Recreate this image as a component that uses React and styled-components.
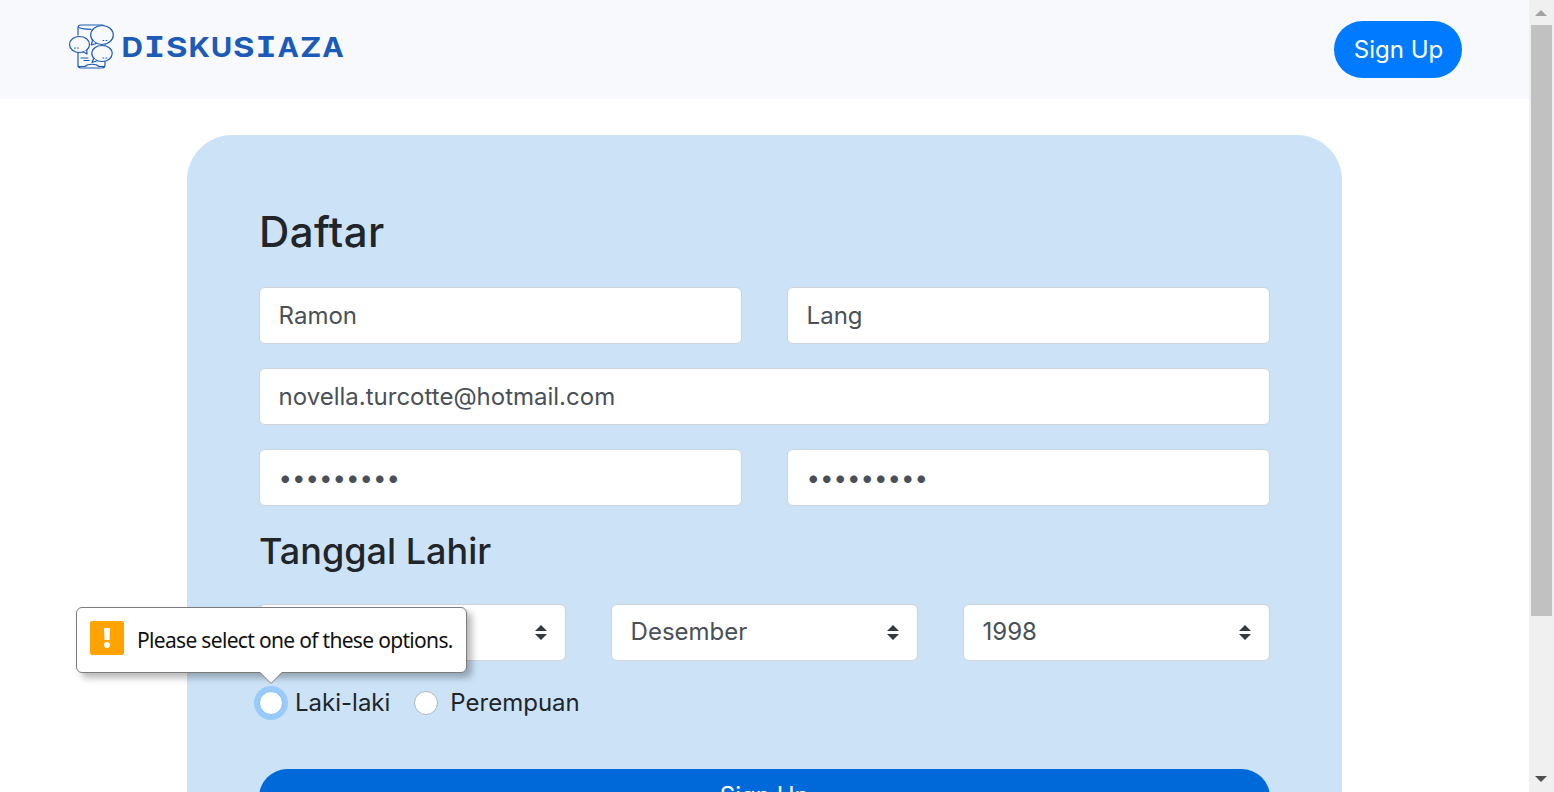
import React from "react";
import styled, { createGlobalStyle } from "styled-components";

const GlobalStyle = createGlobalStyle`
  *, *::before, *::after { box-sizing: border-box; }
  body {
    margin: 0;
    overflow: hidden;
    background: #fff;
    color: #212529;
    font-family: Inter, "Liberation Sans", sans-serif;
    font-size: 24px;
    font-weight: 400;
    line-height: 36px;
  }
`;

const Window = styled.div`
  display: flex;
  height: 792px;
  overflow: hidden;
`;

const Page = styled.div`
  flex: 1;
  min-width: 0;
  overflow: hidden;
`;

const Navbar = styled.header`
  display: flex;
  justify-content: space-between;
  align-items: flex-start;
  height: 98.5px;
  padding: 21px 67px 0 66px;
  background: #f8f9fc;
`;

const Brand = styled.a`
  display: block;
  height: 54px;
`;

const Button = styled.button`
  display: block;
  width: ${(p) => (p.$block ? "100%" : "128px")};
  height: 57px;
  padding: ${(p) => (p.$block ? "0 0 4px" : "0 0 0 1px")};
  border: 0;
  border-radius: 29px;
  background: ${(p) => (p.$block ? "#0069d9" : "#007bff")};
  color: #fff;
  font: 400 24px/${(p) => (p.$block ? "53px" : "57px")} Inter, sans-serif;
  text-align: center;
`;

const Card = styled.main`
  width: 1155px;
  height: 800px;
  margin: 36.5px auto 0;
  padding: 72px 72px 0;
  border-radius: 45px;
  background: #cce3f7;
`;

const Title = styled.h1`
  margin: 0 0 30px;
  font-size: 42px;
  font-weight: 500;
  line-height: 50px;
  letter-spacing: 0.4px;
`;

const Subtitle = styled.h2`
  margin: 0 0 31px;
  font-size: 36px;
  font-weight: 500;
  line-height: 43px;
`;

const Row = styled.div`
  display: flex;
  gap: 45px;
  margin-bottom: 24px;
`;

const Input = styled.input`
  flex: 1;
  min-width: 0;
  height: 57px;
  padding: 0 18px 0 18.6px;
  border: 1px solid #ced4da;
  border-radius: 6px;
  outline: 0;
  background: #fff;
  color: #495057;
  font: 400 24px Inter, sans-serif;
`;

const SelectBox = styled.div`
  display: flex;
  flex: 1;
  justify-content: space-between;
  align-items: center;
  height: 57px;
  padding: 0 18px 0 18.6px;
  border: 1px solid #ced4da;
  border-radius: 6px;
  background: #fff;
  color: #495057;
`;

const SelectValue = styled.span`
  padding-bottom: 2px;
`;

const Options = styled.div`
  display: flex;
  gap: 24px;
  height: 36px;
  margin-bottom: 48px;
`;

const Option = styled.label`
  position: relative;
  display: flex;
  align-items: center;
  gap: 12px;
`;

const Radio = styled.span`
  width: 24px;
  height: 24px;
  border: 1px solid ${(p) => (p.$focused ? "#80bdff" : "#adb5bd")};
  border-radius: 50%;
  background: #fff;
  box-shadow: ${(p) => (p.$focused ? "0 0 0 5px #99caf9" : "none")};
`;

const Bubble = styled.div`
  position: absolute;
  left: -183px;
  top: -78px;
  display: flex;
  align-items: center;
  width: 390.5px;
  height: 66px;
  padding: 0 13px;
  gap: 13px;
  border: 1px solid #7c7c7c;
  border-radius: 6px;
  background: #fff;
  box-shadow: 5px 5px 7px rgba(0, 0, 0, 0.28);
  color: #111;
`;

const WarningIcon = styled.svg`
  flex: none;
  margin-top: -5px;
`;

const BubbleText = styled.span`
  font: 400 21px/30px "Noto Sans", sans-serif;
  letter-spacing: -0.68px;
  white-space: nowrap;
`;

const BubbleArrow = styled.svg`
  position: absolute;
  left: 182px;
  top: 63px;
`;

const Scrollbar = styled.div`
  display: flex;
  flex-direction: column;
  align-items: center;
  width: 25px;
  height: 792px;
  padding: 9px 2px 9px 1px;
  background: #f0f0f0;
`;

const Thumb = styled.div`
  width: 21px;
  height: 591px;
  margin: 9px 0 auto;
  background: #c1c1c1;
`;

const wordmark = "DISKUSIAZA";

function Logo() {
  return (
    <svg width="284" height="54" viewBox="0 0 284 54" fill="none" stroke="#1d5bb9" strokeWidth="1.2" strokeLinecap="round" strokeLinejoin="round">
      <path d="M12 14V7q0-3 3-3h21q3 0 3 3v37q0 3-3 3H15q-3 0-3-3V31M12 6.5q3 1 6 1.3t7 .5M12 45.5h7c3-3 11-3 14 0h5M15 37h7M18 39.5h5" />
      <ellipse cx="36" cy="14" rx="11.3" ry="9.5" fill="#f8f9fc" />
      <path fill="#f8f9fc" d="M26.5 19.5 25.3 24 30 22.5" />
      <ellipse cx="13.5" cy="23.5" rx="10" ry="8" fill="#f8f9fc" />
      <path fill="#f8f9fc" d="M17 30.5 21 33 20.8 29" />
      <ellipse cx="36" cy="32.5" rx="10.2" ry="8" fill="#f8f9fc" />
      <path fill="#f8f9fc" d="M27.7 37.5 26 41.5 31 39.8" />
      <path d="M8.5 27h.8M11.5 27h.8M37 19.5h.8M40 19.5h.8M37 37h.8M40 37h.8" />
      <text y="36" fill="#1d5bb9" stroke="none" fontFamily="Inter" fontWeight="700" fontSize="27.5">
        {[...wordmark].map((letter, i) => (
          <tspan
            key={i}
            x={55.5 + i * 22.3}
            textLength={21.5}
            lengthAdjust="spacingAndGlyphs"
            fontFamily={letter === "I" ? "DejaVu Sans Mono" : "Inter"}
          >
            {letter}
          </tspan>
        ))}
      </text>
    </svg>
  );
}

function Select({ value }) {
  return (
    <SelectBox>
      <SelectValue>{value}</SelectValue>
      <svg width="12" height="15" viewBox="0 0 12 15" fill="#343a40">
        <path d="M0 6 6 0l6 6ZM0 9h12l-6 6Z" />
      </svg>
    </SelectBox>
  );
}

export default function App() {
  return (
    <Window>
      <GlobalStyle />
      <Page>
        <Navbar>
          <Brand><Logo /></Brand>
          <Button>Sign Up</Button>
        </Navbar>
        <Card>
          <Title>Daftar</Title>
          <Row>
            <Input defaultValue="Ramon" />
            <Input defaultValue="Lang" />
          </Row>
          <Row><Input defaultValue="novella.turcotte@hotmail.com" /></Row>
          <Row>
            <Input type="password" defaultValue="Pass12345" />
            <Input type="password" defaultValue="Pass12345" />
          </Row>
          <Subtitle>Tanggal Lahir</Subtitle>
          <Row>
            <Select value="" />
            <Select value="Desember" />
            <Select value="1998" />
          </Row>
          <Options>
            <Option>
              <Radio $focused />
              Laki-laki
              <Bubble>
                <WarningIcon width="34" height="34" viewBox="0 0 34 34">
                  <rect width="34" height="34" rx="2" fill="#ffa300" />
                  <path fill="#fff" d="M14 7h6l-.5 12h-5Z" />
                  <circle cx="17" cy="24" r="3" fill="#fff" />
                </WarningIcon>
                <BubbleText>Please select one of these options.</BubbleText>
                <BubbleArrow width="24" height="14" viewBox="0 0 24 14">
                  <path d="M0 0H24L12 12.5Z" fill="#fff" />
                  <path d="M0 1.5H1L12 12.5 23 1.5H24" fill="none" stroke="#7c7c7c" />
                </BubbleArrow>
              </Bubble>
            </Option>
            <Option><Radio />Perempuan</Option>
          </Options>
          <Button $block>Sign Up</Button>
        </Card>
      </Page>
      <Scrollbar>
        <svg width="12" height="7" viewBox="0 0 12 7"><path d="M0 7 6 1l6 6Z" fill="#a3a3a3" /></svg>
        <Thumb />
        <svg width="12" height="7" viewBox="0 0 12 7"><path d="M0 0h12L6 6Z" fill="#505050" /></svg>
      </Scrollbar>
    </Window>
  );
}
